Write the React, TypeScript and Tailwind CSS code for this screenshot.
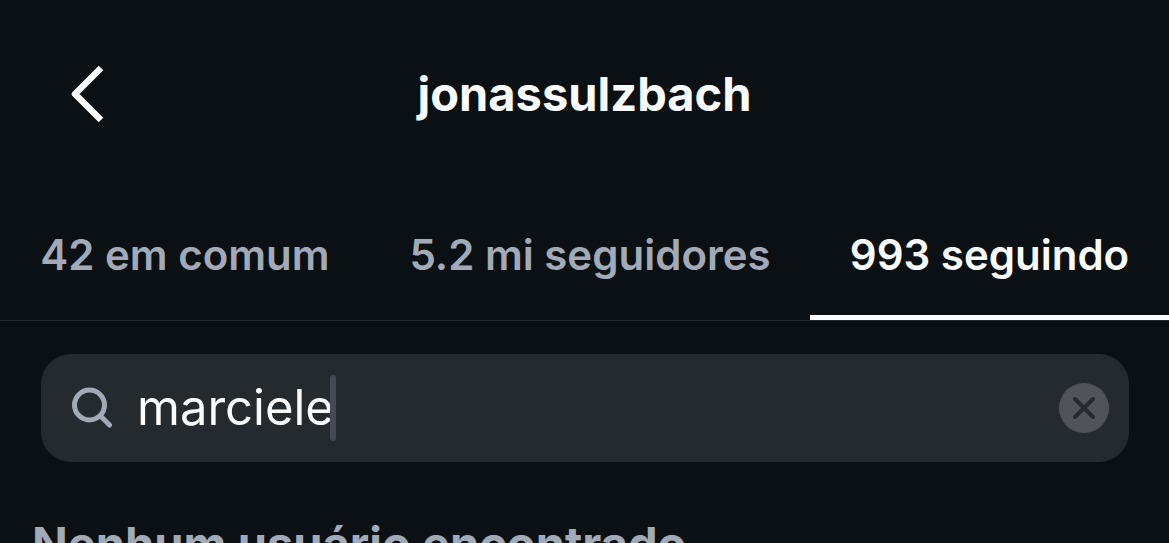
import { useState } from "react";

const tabs = ["42 em comum", "5.2 mi seguidores", "993 seguindo"];

const App = () => {
  const [active, setActive] = useState(2);
  const [query, setQuery] = useState("marciele");

  return (
    <div className="h-screen overflow-hidden bg-[#0b1014] font-['Inter',sans-serif] text-[#f9fafb]">
      <header className="grid grid-cols-[64px_1fr_64px] items-center px-10 pt-[62px]">
        <button type="button" aria-label="Voltar" className="flex pl-7">
          <svg
            viewBox="0 0 36 64"
            className="h-16 w-9 shrink-0"
            fill="none"
            stroke="currentColor"
            strokeWidth="6.5"
            strokeLinejoin="round"
          >
            <path d="M33 6 7 32 33 58" />
          </svg>
        </button>
        <h1 className="text-center text-[47px] leading-[62px] font-bold">
          jonassulzbach
        </h1>
      </header>

      <nav className="mt-16 grid grid-cols-[370fr_440fr_359fr] border-b border-[#24292e]">
        {tabs.map((tab, i) => (
          <button
            key={tab}
            type="button"
            onClick={() => setActive(i)}
            className={`border-b-[5px] pt-10 pb-[35px] text-[42px] leading-[50px] font-semibold whitespace-nowrap ${
              i === active
                ? "border-white text-[#f9fafb]"
                : "border-transparent text-[#a2aab8]"
            }`}
          >
            {tab}
          </button>
        ))}
      </nav>

      <main className="pt-[33px] pr-10 pl-[41px]">
        <div className="flex h-[108px] items-center rounded-[30px] bg-[#252a2e] pr-5 pl-[30px]">
          <label htmlFor="search" aria-label="Pesquisar">
            <svg
              viewBox="0 0 42 42"
              className="size-[42px]"
              fill="none"
              stroke="#a2aab8"
              strokeWidth="5"
              strokeLinecap="round"
            >
              <circle cx="18.5" cy="18" r="15" />
              <path d="M29.500 29 38.500 38" />
            </svg>
          </label>
          <input
            id="search"
            type="text"
            value={query}
            onChange={(e) => setQuery(e.target.value)}
            className="ml-6 field-sizing-content bg-transparent text-[49px] leading-[64px] caret-transparent outline-none"
          />
          <span className="-ml-1 h-[66px] w-[6px] rounded-full bg-[#464b53]" />
          <button
            type="button"
            aria-label="Limpar"
            onClick={() => setQuery("")}
            className="ml-auto flex size-[50px] items-center justify-center rounded-full bg-[#505459]"
          >
            <svg
              viewBox="0 0 24 24"
              className="size-6"
              fill="none"
              stroke="#252a2e"
              strokeWidth="4"
              strokeLinecap="round"
            >
              <path d="M3 3 21 21M21 3 3 21" />
            </svg>
          </button>
        </div>
      </main>

      <p className="px-8 pt-[54px] text-[47px] leading-[56px] font-bold whitespace-nowrap text-[#a2aab8]">
        Nenhum usuário encontrado
      </p>
    </div>
  );
};

export default App;
